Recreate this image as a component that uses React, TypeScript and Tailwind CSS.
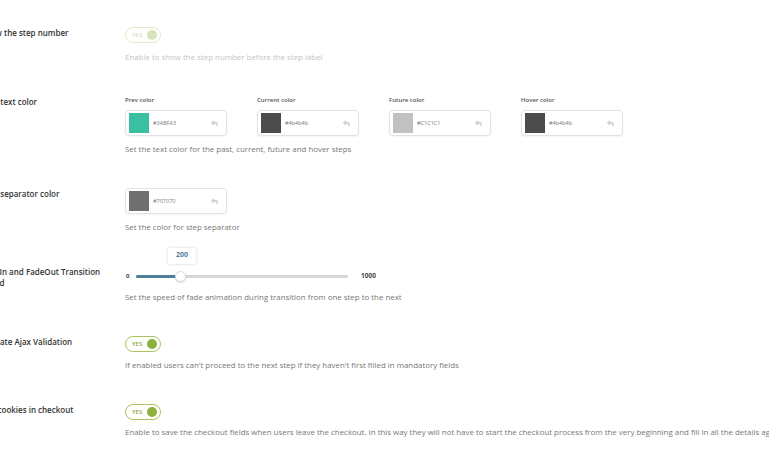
import { FaReply } from "react-icons/fa";

const colorFields = [
  { label: "Prev color", hex: "#3ABFA3", swatch: "bg-[#3abfa3]" },
  { label: "Current color", hex: "#4b4b4b", swatch: "bg-[#4b4b4b]" },
  { label: "Future color", hex: "#C1C1C1", swatch: "bg-[#c1c1c1]" },
  { label: "Hover color", hex: "#4b4b4b", swatch: "bg-[#4b4b4b]" },
];

function Toggle({ faded = false }: { faded?: boolean }) {
  return (
    <div
      className={[
        "flex h-[16px] w-[36px] items-center justify-between rounded-full border border-[#aac45e] bg-white pl-[6px] pr-[3px]",
        faded ? "opacity-35" : "",
      ].join(" ")}
    >
      <span className="text-[6px] font-semibold leading-none text-[#88a63c]">
        YES
      </span>
      <span className="h-[10px] w-[10px] rounded-full bg-[#8db13a]" />
    </div>
  );
}

function ColorBox({ hex, swatch }: { hex: string; swatch: string }) {
  return (
    <div className="flex h-[26px] w-[102px] items-center rounded-[4px] border border-[#e3e3e3] bg-white pl-[3px] pr-[8px] shadow-[0_1px_2px_rgba(0,0,0,0.05)]">
      <span className={["h-[20px] w-[20px] shrink-0", swatch].join(" ")} />
      <span className="ml-[4px] text-[5.5px] text-[#777]">{hex}</span>
      <FaReply className="ml-auto text-[#d0d0d0]" size={7} />
    </div>
  );
}

function Row({
  label,
  children,
}: {
  label: string;
  children: React.ReactNode;
}) {
  return (
    <div className="flex items-start">
      <div className="w-[144px] shrink-0 pr-[24px] text-[8px] font-semibold leading-[11px] text-[#333]">
        {label}
      </div>
      <div className="flex flex-col">{children}</div>
    </div>
  );
}

function Desc({ children, faded = false }: { children: React.ReactNode; faded?: boolean }) {
  return (
    <p
      className={[
        "whitespace-nowrap text-[7.9px] leading-[12px]",
        faded ? "text-[#c4c4c4]" : "text-[#777]",
      ].join(" ")}
    >
      {children}
    </p>
  );
}

export default function App() {
  return (
    <div
      className="h-[452px] w-[769px] overflow-hidden bg-white"
      style={{ fontFamily: '"Open Sans", "Noto Sans", sans-serif' }}
    >
      <div className="ml-[-19px] flex flex-col gap-[33px] pt-[27px]">
        <Row label="Show the step number">
          <Toggle faded />
          <div className="mt-[8px]">
            <Desc faded>Enable to show the step number before the step label</Desc>
          </div>
        </Row>

        <Row label="Step text color">
          <div className="flex gap-[30px]">
            {colorFields.map((item) => (
              <div key={item.label} className="flex flex-col">
                <span className="mb-[6px] text-[6px] font-semibold leading-[8px] text-[#555]">
                  {item.label}
                </span>
                <ColorBox hex={item.hex} swatch={item.swatch} />
              </div>
            ))}
          </div>
          <div className="mt-[7px]">
            <Desc>Set the text color for the past, current, future and hover steps</Desc>
          </div>
        </Row>

        <Row label="Step separator color">
          <ColorBox hex="#707070" swatch="bg-[#707070]" />
          <div className="mt-[7px]">
            <Desc>Set the color for step separator</Desc>
          </div>
        </Row>

        <Row label="FadeIn and FadeOut Transition Speed">
          <div className="mt-[3px] flex h-[14px] items-center">
            <span className="w-[11px] pl-[1px] text-[6px] font-bold text-[#444]">0</span>
            <div className="relative h-[3px] w-[212px] rounded-full bg-[#d6d6d6]">
              <div className="h-[3px] w-[44px] rounded-full bg-[#4f7f99]" />
              <div className="absolute left-[39px] top-[-4px] h-[11px] w-[11px] rounded-full border border-[#dcdcdc] bg-white shadow-[0_1px_2px_rgba(0,0,0,0.15)]" />
              <div className="absolute left-[32px] top-[-27px] flex h-[16px] w-[28px] items-center justify-center rounded-[2px] bg-white text-[7px] font-bold text-[#4d7d96] shadow-[0_0_3px_rgba(0,0,0,0.18)]">
                200
              </div>
            </div>
            <span className="ml-[13px] text-[6.5px] font-bold text-[#444]">1000</span>
          </div>
          <div className="mt-[8px]">
            <Desc>Set the speed of fade animation during transition from one step to the next</Desc>
          </div>
        </Row>

        <Row label="Activate Ajax Validation">
          <Toggle />
          <div className="mt-[7px]">
            <Desc>
              If enabled users can't proceed to the next step if they haven't first filled in mandatory fields
            </Desc>
          </div>
        </Row>

        <Row label="Use cookies in checkout">
          <Toggle />
          <div className="mt-[6px]">
            <Desc>
              Enable to save the checkout fields when users leave the checkout. In this way they will not have to start the checkout process from the very beginning and fill in all the details again
            </Desc>
          </div>
        </Row>
      </div>
    </div>
  );
}
